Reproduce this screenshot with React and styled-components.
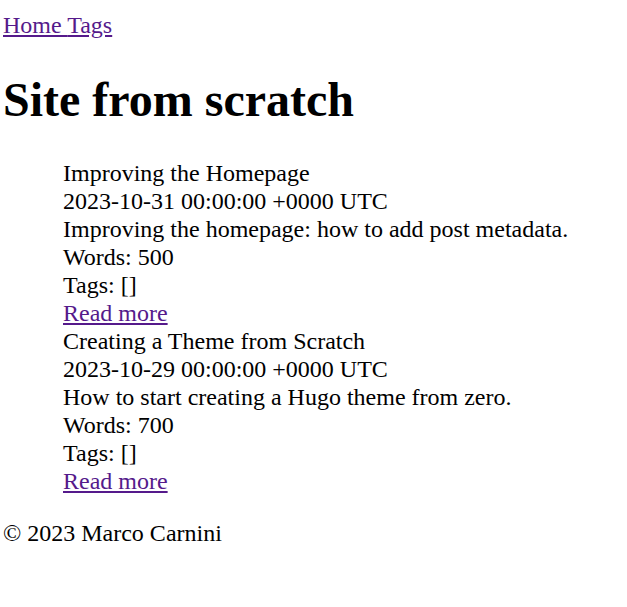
import styled, { createGlobalStyle } from 'styled-components'

const GlobalStyle = createGlobalStyle`
  body {
    margin: 0;
    background: #fff;
    color: #000;
    font-family: "Liberation Serif", "Times New Roman", serif;
    font-size: 24px;
    line-height: 28px;
  }
`

const Page = styled.div`
  padding: 11px 3px 0;
`

const Nav = styled.nav`
  display: block;
`

const Link = styled.a`
  color: #551a8b;
  text-decoration: underline;
  cursor: pointer;
`

const Title = styled.h1`
  font-size: 48px;
  line-height: 55px;
  font-weight: bold;
  margin: 33px 0 32px;
`

const PostList = styled.ul`
  list-style: none;
  margin: 0 0 24px;
  padding-left: 60px;
`

const Post = styled.li`
  display: flex;
  flex-direction: column;
`

const Line = styled.div``

const Footer = styled.footer``

const posts = [
  {
    title: 'Improving the Homepage',
    date: '2023-10-31 00:00:00 +0000 UTC',
    summary: 'Improving the homepage: how to add post metadata.',
    words: 500,
  },
  {
    title: 'Creating a Theme from Scratch',
    date: '2023-10-29 00:00:00 +0000 UTC',
    summary: 'How to start creating a Hugo theme from zero.',
    words: 700,
  },
]

const App = () => {
  return (
    <>
      <GlobalStyle />
      <Page>
        <Nav>
          <Link>Home </Link>
          <Link>Tags</Link>
        </Nav>
        <Title>Site from scratch</Title>
        <PostList>
          {posts.map((p) => (
            <Post key={p.title}>
              <Line>{p.title}</Line>
              <Line>{p.date}</Line>
              <Line>{p.summary}</Line>
              <Line>Words: {p.words}</Line>
              <Line>Tags: []</Line>
              <Line>
                <Link>Read more</Link>
              </Line>
            </Post>
          ))}
        </PostList>
        <Footer>© 2023 Marco Carnini</Footer>
      </Page>
    </>
  )
}

export default App
